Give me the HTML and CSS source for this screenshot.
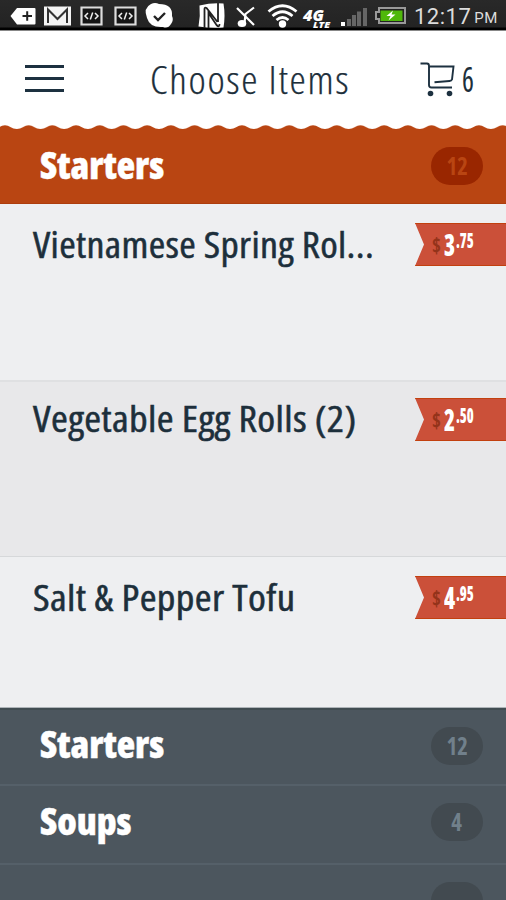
FILE: index.html
```html
<!DOCTYPE html>
<html lang="en">
<head>
<meta charset="utf-8">
<title>Choose Items</title>
<link rel="stylesheet" href="styles.css">
</head>
<body>
<div class="status">
  <svg class="status-icons" width="410" height="30" viewBox="0 0 410 30">
    <path fill="#fff" d="M10.500 16L17 8h17.500q1 0 1 1v14.500q0 1-1 1H17z"/>
    <path stroke="#222" stroke-width="2" d="M22.500 16h9.500M27.200 11.300v9.500"/>
    <path fill="#f4f4f4" d="M44 6.500h27v19H44z"/>
    <path fill="none" stroke="#333" stroke-width="2" d="M48 23V9.500L57.500 19 67 9.500V23"/>
    <g id="dev"><path fill="#151515" stroke="#ddd" stroke-width="2.200" d="M81.500 7.500h20v17h-20z"/><path fill="none" stroke="#eee" stroke-width="1.500" d="M88 13l-3 3 3 3M95 13l3 3-3 3M92.700 12.500l-2.400 7"/></g>
    <use href="#dev" x="34"/>
    <path fill="#fff" d="M151 4q4-2 8 0 14 0 13 12 2 4-1 8-3 5-8 3-13 1-16-9-4-10 4-14z"/>
    <path fill="none" stroke="#222" stroke-width="2.400" d="M154 16l4 4 7-7"/>
    <path fill="#fff" d="M199.500 5.500q12-3 24-2 2 12 0 24-12 1-25-1 2-11 1-21z"/>
    <path fill="none" stroke="#222" stroke-width="1.800" d="M204.500 28V9q0-2 2-1l11 14M218 3v19M208.500 28V13l8 12q3 3 3-1"/>
    <g fill="none" stroke="#fff" stroke-width="2.200"><path d="M237 8l17 17M244.500 23l1-9L254 7.500"/></g><ellipse cx="242" cy="23.500" rx="4.300" ry="3.500" fill="#fff"/>
    <g fill="none" stroke="#fff" stroke-width="2.800"><path d="M268.500 11.500q14-11.500 28 0M272.500 16q10-8.500 20 0M276.500 20q6-5 12 0"/></g><circle cx="282.500" cy="24" r="3.700" fill="#fff"/>
    <text class="net" x="303" y="20.500" textLength="21" lengthAdjust="spacingAndGlyphs">4G</text>
    <text class="lte" x="313" y="28" textLength="17" lengthAdjust="spacingAndGlyphs">LTE</text>
    <path fill="#fff" d="M341 22h4v4h-4z"/><path fill="#666" d="M347 19h4v7h-4zM352 15h4v11h-4zM357 11.500h4V26h-4zM363 8h4v18h-4z"/>
    <path fill="#222" stroke="#999" stroke-width="2" d="M379 8h26v15h-26v-4h-3v-7h3z"/>
    <path fill="#4fb80b" d="M380.500 10.500h22v10.500h-22z"/>
    <path fill="#fff" d="M393 10.500l-6.500 5.500h4l-2 4.500 7-6h-4z"/>
  </svg>
  <span class="clock">12:17</span><span class="pm">PM</span>
</div>
<header class="bar">
  <div class="menu"><i></i><i></i><i></i></div>
  <h1 class="title">Choose Items</h1>
  <div class="cart">
    <svg width="36" height="36" viewBox="0 0 36 36" fill="none" stroke="#1d3140" stroke-width="1.900"><path d="M.5 2.500H7q2 0 2 2.500v19q0 2.500 2.500 2.500H32M9 5.500h24.500L32 18.500q-.5 1.300-2.500 1.500L14.500 21.300"/><circle cx="10.500" cy="32.500" r="2.800" fill="#1d3140" stroke="none"/><circle cx="29.500" cy="32.500" r="2.800" fill="#1d3140" stroke="none"/></svg>
    <span class="cart-count">6</span>
  </div>
</header>
<svg class="scallop" width="506" height="5"><defs><pattern id="wave" x="-6.900" width="23.700" height="5" patternUnits="userSpaceOnUse"><path fill="#b94512" d="M0 5V4Q3.500 4 6 2.200 11.850-1.600 17.700 2.200 20 4 23.700 4V5z"/></pattern></defs><rect width="506" height="5" fill="url(#wave)"/></svg>
<section class="cat active"><h2 class="name">Starters</h2><b class="pill"><span>12</span></b></section>
<main>
  <article class="item one"><h3 class="dish">Vietnamese Spring Rol...</h3><div class="tag"><i>$</i><b>3</b><em>.75</em></div></article>
  <article class="item two"><h3 class="dish">Vegetable Egg Rolls (2)</h3><div class="tag"><i>$</i><b>2</b><em>.50</em></div></article>
  <article class="item three"><h3 class="dish">Salt &amp; Pepper Tofu</h3><div class="tag"><i>$</i><b>4</b><em>.95</em></div></article>
</main>
<section class="cat dark first"><h2 class="name">Starters</h2><b class="pill"><span>12</span></b></section>
<section class="cat dark"><h2 class="name">Soups</h2><b class="pill"><span>4</span></b></section>
<section class="cat dark last"><b class="pill"></b></section>
</body>
</html>
```

FILE: styles.css
```css
* { box-sizing: border-box; }
body { margin: 0; width: 506px; height: 900px; overflow: hidden; background: #fff; color: #1d2f3b; font-family: "Open Sans", "Noto Sans", sans-serif; font-stretch: 75%; }
h1, h2, h3 { margin: 0; font-weight: 400; white-space: nowrap; }
i, em { font-style: normal; }
.status { display: flex; height: 31px; background: linear-gradient(#292929, #232323 27px, #000 28px, #000 30px, #888 30px); color: #ddd; font-family: Roboto, sans-serif; font-stretch: 100%; }
.status-icons { flex: none; }
.net, .lte { font: italic 900 15px "Open Sans", sans-serif; fill: #fff; }
.lte { font-size: 8px; }
.clock { margin-left: 4px; font-size: 22px; line-height: 33px; letter-spacing: .5px; }
.pm { margin-left: 3px; font-size: 15px; line-height: 37px; letter-spacing: .5px; }
.bar { display: flex; height: 94px; background: #fff; }
.menu { display: flex; flex-direction: column; gap: 9px; width: 39px; margin: 34px 0 0 25px; }
.menu i { height: 3px; background: #1d3140; }
.title { width: 198px; margin-left: 86px; font-size: 39px; font-weight: 350; line-height: 96px; letter-spacing: 1.6px; -webkit-text-stroke: .25px; transform: scaleX(1.055); transform-origin: 0 50%; }
.cart { display: flex; margin-left: 72px; }
.cart svg { margin-top: 30px; flex: none; }
.cart-count { margin-left: 6px; font-size: 35px; font-weight: 500; line-height: 95px; transform: scaleX(.8); transform-origin: 0 50%; }
.scallop { display: block; }
.cat { display: flex; justify-content: space-between; padding: 0 23px 0 40px; color: #fff; }
.active { height: 74px; background: #b94512; border-bottom: 1px solid #ad3d0d; }
.name { font-size: 37px; font-weight: 800; line-height: 70px; -webkit-text-stroke: .4px; transform: scaleX(1.022); transform-origin: 0 50%; }
.pill { display: flex; align-items: center; justify-content: center; width: 52px; height: 38px; margin-top: 17px; border-radius: 19px; background: #992600; color: #b94512; font-size: 24px; font-weight: 700; }
.pill span { transform: translateY(-1px) scaleX(.95); }
.item { display: flex; justify-content: space-between; padding-left: 33px; background: #eeeff1; }
.one { height: 178px; border-bottom: 2px solid #dfe0e2; padding-top: 19px; }
.two { height: 175px; border-bottom: 1px solid #d6d8da; background: #e8e8ea; padding-top: 16px; }
.three { height: 151px; border-bottom: 1px solid #aeb4b8; padding-top: 19px; }
.dish { width: 300px; font-size: 36px; font-weight: 500; line-height: 44px; letter-spacing: .3px; -webkit-text-stroke: .5px; transform: scaleX(1.108); transform-origin: 0 50%; }
.two .dish { line-height: 42px; transform: scaleX(1.131); }
.three .dish { transform: scaleX(1.13); }
.tag { display: flex; width: 91px; height: 43px; padding-left: 17px; background: #cb5039; border: solid #c2400f; border-width: 1px 0; clip-path: polygon(0 0, 100% 0, 100% 100%, 0 100%, 9px 50%); color: #fff; }
.tag i { width: 12px; font-size: 21px; font-weight: 700; line-height: 42px; color: #93331a; transform: scaleX(.9); transform-origin: 0 50%; }
.tag b { width: 12px; font-size: 30px; font-weight: 800; line-height: 41px; transform: scaleX(.75); transform-origin: 0 50%; }
.tag em { font-size: 21px; font-weight: 800; line-height: 33px; transform: scaleX(.67); transform-origin: 0 50%; }
.dark { height: 79px; background: #4c565e; border-top: 2px solid #556069; }
.dark .pill { background: #424a50; color: #71808b; }
.dark .name { line-height: 70px; }
.first { height: 76px; border-top-color: #414d52; }
.first .name { line-height: 68px; }
.last { height: 40px; justify-content: flex-end; }
```
